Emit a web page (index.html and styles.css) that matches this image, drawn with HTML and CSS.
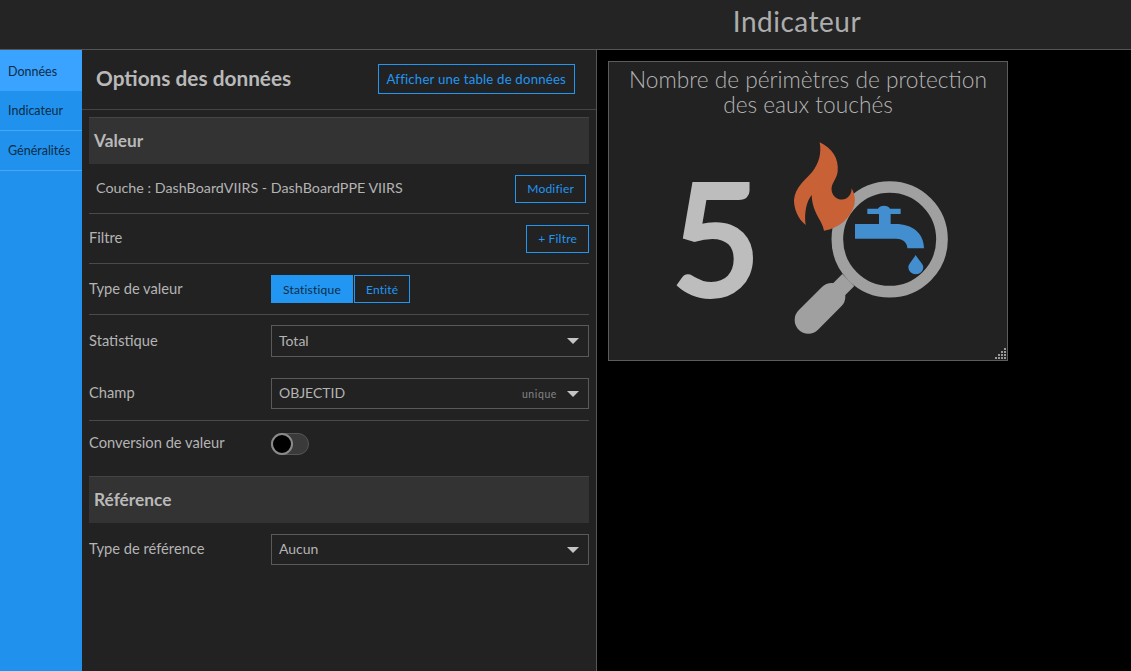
FILE: index.html
```html
<!DOCTYPE html>
<html lang="fr">

<head>
  <meta charset="UTF-8" />
  <meta name="viewport" content="width=device-width, initial-scale=1.0" />
  <title>Indicateur</title>
  <link rel="stylesheet" href="styles.css">
</head>

<body>
  <header class="topbar">
    <h1>Indicateur</h1>
  </header>

  <div class="main">
    <nav class="sidebar">
      <a class="tab active">Données</a>
      <a class="tab">Indicateur</a>
      <a class="tab">Généralités</a>
    </nav>

    <section class="panel">
      <div class="panel-head">
        <h2>Options des données</h2>
        <button class="btn btn-table">Afficher une table de données</button>
      </div>

      <div class="panel-body">
        <h3 class="section first">Valeur</h3>

        <div class="row row-layer">
          <span class="layer">Couche : DashBoardVIIRS - DashBoardPPE VIIRS</span>
          <button class="btn btn-edit">Modifier</button>
        </div>

        <div class="row row-filter">
          <span class="label">Filtre</span>
          <button class="btn">+ Filtre</button>
        </div>

        <div class="row row-type">
          <span class="label">Type de valeur</span>
          <div class="switcher">
            <button class="btn btn-on">Statistique</button>
            <button class="btn">Entité</button>
          </div>
        </div>

        <div class="row row-stat">
          <span class="label">Statistique</span>
          <div class="select select-tall">
            <span>Total</span>
            <i class="caret"></i>
          </div>
        </div>

        <div class="row row-field">
          <span class="label">Champ</span>
          <div class="select">
            <span>OBJECTID</span>
            <small>unique</small>
            <i class="caret"></i>
          </div>
        </div>

        <div class="row row-convert">
          <span class="label">Conversion de valeur</span>
          <div class="toggle"><i class="knob"></i></div>
        </div>

        <h3 class="section">Référence</h3>

        <div class="row row-ref">
          <span class="label">Type de référence</span>
          <div class="select">
            <span>Aucun</span>
            <i class="caret"></i>
          </div>
        </div>
      </div>
    </section>

    <section class="stage">
      <div class="card">
        <p class="card-title">Nombre de périmètres de protection des eaux touchés</p>
        <div class="card-content">
          <span class="big-value">5</span>
          <svg class="card-icon" viewBox="0 0 540 630" width="180" height="210">
            <!-- loupe -->
            <circle cx="332" cy="328" r="157" fill="none" stroke="#a0a0a0" stroke-width="35" />
            <path d="M190 432 L226 468 L190 504 L154 468 Z" fill="#a0a0a0" />
            <line x1="88" y1="570" x2="158" y2="500" stroke="#a0a0a0" stroke-width="82" stroke-linecap="round" />
            <!-- robinet -->
            <path d="M265 236 H297 C302 224 328 224 333 236 H365 V252 H335 V282 H350 C400 282 435 310 435 355 H385 C385 340 375 326 350 326 H228 V282 H300 V252 H265 Z" fill="#428ecf" />
            <path d="M410 375 C420 392 433 402 433 412 A22 20 0 0 1 388 412 C388 402 400 392 410 375 Z" fill="#428ecf" />
            <!-- flamme -->
            <path d="M122 37 C160 55 180 85 176 125 C172 150 155 160 158 182 C162 205 185 215 203 205 C213 198 218 188 218 175 C226 190 230 205 226 225 C215 265 180 295 135 302 C130 270 100 250 98 195 C82 215 75 250 80 285 C55 265 45 235 45 210 C48 170 80 150 100 125 C120 100 128 70 122 37 Z" fill="#c96137" />
          </svg>
        </div>
        <svg class="grip" viewBox="0 0 11 11" width="11" height="11">
          <g fill="#999">
            <rect x="9" y="0" width="2" height="2" />
            <rect x="9" y="3" width="2" height="2" />
            <rect x="6" y="3" width="2" height="2" />
            <rect x="9" y="6" width="2" height="2" />
            <rect x="6" y="6" width="2" height="2" />
            <rect x="3" y="6" width="2" height="2" />
            <rect x="9" y="9" width="2" height="2" />
            <rect x="6" y="9" width="2" height="2" />
            <rect x="3" y="9" width="2" height="2" />
            <rect x="0" y="9" width="2" height="2" />
          </g>
        </svg>
      </div>
    </section>
  </div>
</body>

</html>
```

FILE: styles.css
```css
* {
  box-sizing: border-box;
}

html,
body {
  height: 100%;
}

body {
  margin: 0;
  background-color: #000;
  color: #b4b4b4;
  font-family: "Lato", "Liberation Sans", sans-serif;
  font-size: 14px;
  overflow: hidden;
}

.topbar {
  height: 50px;
  padding-left: 463px;
  display: flex;
  align-items: center;
  justify-content: center;
  background-color: #242424;
  border-bottom: 1px solid #555;
}

.topbar h1 {
  margin: 0 0 8px;
  font-size: 28px;
  font-weight: 400;
  color: #adadad;
  letter-spacing: 0.5px;
}

.main {
  display: flex;
  height: 621px;
}

.sidebar {
  width: 82px;
  flex: none;
  background-color: #2092ee;
}

.tab {
  display: block;
  height: 40px;
  padding: 0 8px;
  line-height: 40px;
  font-size: 12.5px;
  color: #0d2c44;
  border-bottom: 1px solid #45a8f6;
}

.tab.active {
  height: 41px;
  line-height: 43px;
  background-color: #3aa3ff;
  border-bottom: none;
}

.panel {
  width: 515px;
  flex: none;
  background-color: #222;
  border-right: 1px solid #555;
}

.panel-head {
  height: 60px;
  padding: 0 21px 0 14px;
  display: flex;
  align-items: center;
  justify-content: space-between;
  border-bottom: 1px solid #444;
}

.panel-head h2 {
  margin: 0 0 4px;
  font-size: 20.8px;
  font-weight: 700;
  color: #b9b9b9;
}

.panel-body {
  padding: 7px 7px 0;
}

.section {
  height: 47px;
  margin: 0;
  padding-left: 5px;
  line-height: 45px;
  font-size: 17.3px;
  font-weight: 700;
  color: #b9b9b9;
  background-color: #333;
  border-top: 1px solid #444;
}

.btn {
  height: 30px;
  padding: 0 8px;
  background: none;
  border: 1px solid #2196f3;
  color: #2196f3;
  font-family: inherit;
  font-size: 12px;
  letter-spacing: 0.2px;
}

.btn-table {
  padding: 0 8px;
  font-size: 13.2px;
  margin-bottom: 1px;
}

.row {
  display: flex;
  align-items: center;
  font-size: 14.7px;
  border-bottom: 1px solid #4a4a4a;
}

.row .btn {
  height: 28px;
  padding: 0 11px;
}

.label {
  width: 182px;
  flex: none;
  padding-bottom: 3px;
}

.layer {
  font-size: 14.3px;
  padding-bottom: 2px;
}

.row-layer {
  height: 50px;
  padding: 0 3px 0 7px;
  justify-content: space-between;
}

.row-filter {
  height: 50px;
  justify-content: space-between;
}

.row-type {
  height: 51px;
}

.switcher {
  display: flex;
  gap: 1px;
}

.btn-on {
  background-color: #2196f3;
  color: #0d2c44;
}

.row-stat {
  height: 52px;
  border-bottom: none;
}

.row-field {
  height: 54px;
}

.row-convert {
  height: 55px;
  padding-bottom: 10px;
  border-bottom: none;
}

.row-ref {
  height: 53px;
  border-bottom: none;
}

.select {
  flex: 1;
  height: 31px;
  padding: 0 9px 0 7px;
  display: flex;
  align-items: center;
  border: 1px solid #5a5a5a;
  font-size: 14px;
}

.select-tall {
  height: 32px;
}

.select span {
  flex: 1;
  padding-bottom: 2px;
}

.select small {
  margin-right: 10px;
  font-size: 10.5px;
  letter-spacing: 0.6px;
  color: #858585;
}

.caret {
  width: 0;
  height: 0;
  border-left: 6px solid transparent;
  border-right: 6px solid transparent;
  border-top: 6px solid #c4c4c4;
}

.toggle {
  width: 38px;
  height: 22px;
  background-color: #3a3a3a;
  border: 1px solid #555;
  border-radius: 11px;
  position: relative;
}

.knob {
  position: absolute;
  left: -1px;
  top: -1px;
  width: 22px;
  height: 22px;
  background-color: #000;
  border: 2px solid #8a8a8a;
  border-radius: 50%;
}

.stage {
  flex: 1;
  padding: 11px 0 0 11px;
}

.card {
  position: relative;
  width: 400px;
  height: 300px;
  padding: 5px 16px 0;
  background-color: #222;
  border: 1px solid #5c5c5c;
}

.card-title {
  margin: 0 -8px;
  font-size: 22.7px;
  font-weight: 300;
  line-height: 25px;
  text-align: center;
  color: #b4b4b4;
}

.card-content {
  display: flex;
  align-items: flex-start;
}

.big-value {
  width: 154px;
  margin-top: 40px;
  padding-right: 18px;
  flex: none;
  text-align: right;
  font-size: 155px;
  font-weight: 500;
  line-height: 158px;
  color: #bdbdbd;
  -webkit-text-stroke: 4px #bdbdbd;
}

.card-icon {
  display: block;
  margin-top: 13px;
  flex: none;
}

.grip {
  position: absolute;
  right: 1px;
  bottom: 1px;
}
```
